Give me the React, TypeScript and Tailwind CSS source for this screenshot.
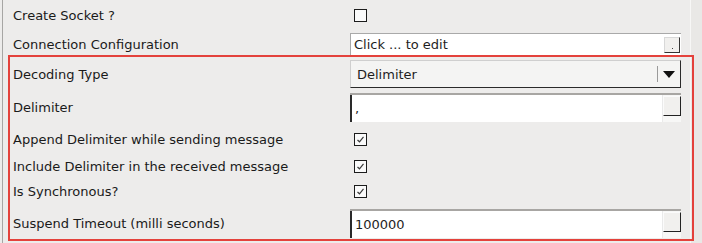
import React from 'react';

const Check = ({ checked }: { checked?: boolean }) => (
  <div className="ml-[4px] flex h-[13px] w-[13px] items-center justify-center border border-[#1c1c1c] bg-[#fafafa]">
    {checked && (
      <svg width="9" height="9" viewBox="0 0 9 9">
        <path d="M1.5 5 L3.5 6.8 L7.5 1.8" fill="none" stroke="#3a3a3a" strokeWidth="1.2" />
      </svg>
    )}
  </div>
);

const EditButton = ({ dot }: { dot?: boolean }) => (
  <div className="flex h-[20px] w-[18px] items-end justify-center border-t border-l border-t-[#fbfbfb] border-l-[#fbfbfb] border-r-[1.5px] border-b-[1.5px] border-r-[#222] border-b-[#222] bg-[#f1f0ee] pb-[3px]">
    {dot && <div className="h-px w-px bg-[#444]" />}
  </div>
);

const SunkenField = ({ value }: { value: string }) => (
  <div className="flex h-[29px] w-[331px] border-t-2 border-t-[#a8a6a3] bg-white">
    <div className="flex flex-1 items-center border-l-2 border-l-[#2a2a2a] pl-[3px] text-[#1e1e1e]">{value}</div>
    <div className="w-px bg-[#eaeaea]" />
    <div className="flex flex-col bg-[#f7f7f6] pt-[1px]">
      <EditButton />
    </div>
  </div>
);

const Row = ({ label, h, children }: { label: string; h: string; children?: React.ReactNode }) => (
  <div className={`flex items-center ${h}`}>
    <div className="w-[347px] pl-[10px]">{label}</div>
    <div className="flex items-center">{children}</div>
  </div>
);

export default function App() {
  return (
    <div className="relative flex h-[243px] w-[702px] overflow-hidden bg-[#edeceb] text-[13px] leading-none text-[#1a1a1a] font-['DejaVu_Sans',sans-serif]">
      <div className="ml-[2px] w-px bg-[#a7a6a4]" />
      <div className="flex w-[687px] flex-col">
        <div className="flex h-[31px] items-center">
          <div className="w-[347px] pl-[10px]">Create Socket ?</div>
          <Check />
        </div>
        <div className="flex h-[26px] items-center">
          <div className="w-[347px] pl-[10px]">Connection Configuration</div>
          <div className="flex h-[22px] w-[331px] items-center border-t border-l border-[#a9a9a9] bg-white">
            <div className="flex-1 pl-[3px] text-[#1e1e1e]">Click ... to edit</div>
            <div className="mr-[1px] flex h-[16px] w-[16px] items-end justify-center border-t border-l border-t-[#d8d8d8] border-l-[#d8d8d8] border-r border-b border-r-[#333] border-b-[#333] bg-[#f1f0ee] pb-[3px]">
              <div className="h-px w-px bg-[#444]" />
            </div>
          </div>
        </div>
        <Row label="Decoding Type" h="h-[34px]">
          <div className="flex h-[28px] w-[331px] items-center border-t border-l border-t-[#cfcfcf] border-l-[#cfcfcf] border-r-[1.5px] border-b-[1.5px] border-r-[#2a2a2a] border-b-[#2a2a2a] bg-[#f4f4f3]">
            <div className="flex-1 pl-[6px] text-[#1e1e1e]">Delimiter</div>
            <div className="h-[16px] w-px bg-[#9a9a9a]" />
            <div className="flex w-[22px] items-center justify-center">
              <svg width="12" height="7" viewBox="0 0 12 7">
                <path d="M0 0 H12 L6 7 Z" fill="#111" />
              </svg>
            </div>
          </div>
        </Row>
        <Row label="Delimiter" h="h-[32px]">
          <SunkenField value="," />
        </Row>
        <Row label="Append Delimiter while sending message" h="h-[32px]">
          <Check checked />
        </Row>
        <Row label="Include Delimiter in the received message" h="h-[22px]">
          <Check checked />
        </Row>
        <Row label="Is Synchronous?" h="h-[29px]">
          <Check checked />
        </Row>
        <Row label="Suspend Timeout (milli seconds)" h="h-[34px]">
          <SunkenField value="100000" />
        </Row>
      </div>
      <div className="w-px bg-[#f7f7f6]" />
      <div className="flex-1 bg-[#e9e8e6]" />
      {/* highlight annotation */}
      <div className="pointer-events-none absolute left-[8px] top-[55px] h-[186px] w-[686px] border-2 border-[#e4423c]" />
    </div>
  );
}
